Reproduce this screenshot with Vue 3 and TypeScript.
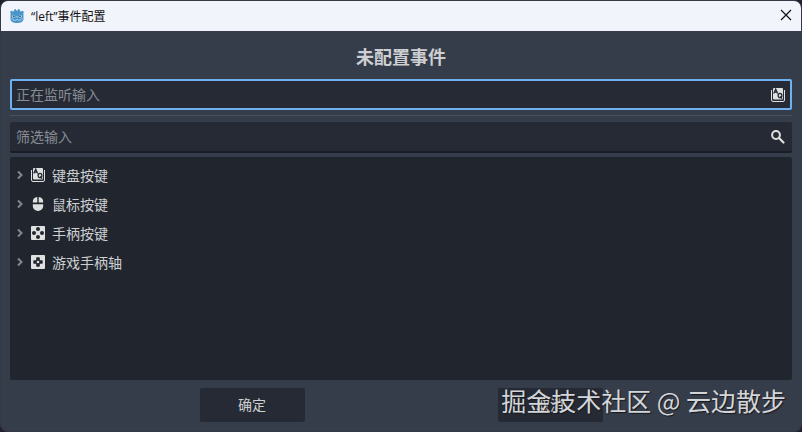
<script setup lang="ts">
import { ref } from 'vue'

type IconName = 'keyboard' | 'mouse' | 'joyButton' | 'joyAxis'

interface InputGroup {
  icon: IconName
  label: string
}

const groups: InputGroup[] = [
  { icon: 'keyboard', label: '键盘按键' },
  { icon: 'mouse', label: '鼠标按键' },
  { icon: 'joyButton', label: '手柄按键' },
  { icon: 'joyAxis', label: '游戏手柄轴' },
]

const listened = ref('')
const filter = ref('')
</script>

<template>
  <div class="window">
    <header class="titlebar">
      <svg class="logo" viewBox="0 0 16 16" aria-hidden="true">
        <path fill="#4a96cb" d="M5.200 1.600 6.800 1l.5 1.500h1.400L9.200 1l1.600.6.2 1.400 1 .6 1.500-.9L15 4l-.8 1.600.3.900V11c0 2.800-3 4-6.500 4s-6.500-1.200-6.500-4V6.500l.3-.9L1 4l1.500-1.300 1.500.9 1-.6z" />
        <path fill="none" stroke="#a9d0ec" stroke-width=".7" d="M1.700 11h2.500l.4 1.400h2.200l.2-.9h2l.2.9h2.200l.4-1.400h2.500" />
        <circle cx="4.700" cy="8.300" r="1.500" fill="#c4e0f4" />
        <circle cx="11.300" cy="8.300" r="1.500" fill="#c4e0f4" />
        <circle cx="4.900" cy="8.300" r="1" fill="#35617f" />
        <circle cx="11.100" cy="8.300" r="1" fill="#35617f" />
        <path stroke="#c4e0f4" stroke-width=".9" d="M8 8v1.600" />
      </svg>
      <span class="caption">“left”事件配置</span>
      <button class="close" type="button" aria-label="关闭">
        <svg viewBox="0 0 12 12" aria-hidden="true"><path d="m1 1 10 10M11 1 1 11" /></svg>
      </button>
    </header>

    <main class="content">
      <h1 class="heading">未配置事件</h1>

      <div class="field listening">
        <input v-model="listened" type="text" aria-label="正在监听输入" placeholder="正在监听输入">
        <svg class="icon" viewBox="0 0 16 16" aria-hidden="true">
          <path fill="currentColor" d="M4 1h8q1 0 1 1v9.500q0 1-1 1H4q-1 0-1-1V2q0-1 1-1z" />
          <path fill="none" stroke="currentColor" d="M1.500 3v10q0 1.500 1.500 1.500h10q1.500 0 1.500-1.500V3" />
          <path class="glyph" d="m3.800 6.500 1.900-4.300 1.900 4.300M4.600 5.200h2.200" />
          <ellipse class="glyph" cx="10" cy="8.500" rx="1.900" ry="2.200" />
          <path class="glyph" d="m10.200 9.500 1.800 2.200" />
        </svg>
      </div>

      <hr class="separator">

      <div class="field filter">
        <input v-model="filter" type="text" aria-label="筛选输入" placeholder="筛选输入">
        <svg class="icon" viewBox="0 0 16 16" aria-hidden="true">
          <circle cx="6" cy="6" r="3.900" fill="none" stroke="currentColor" stroke-width="2" />
          <path d="m9 9 4.500 4.500" stroke="currentColor" stroke-width="2.200" stroke-linecap="round" />
        </svg>
      </div>

      <ul class="tree">
        <li v-for="group in groups" :key="group.icon">
          <button class="row" type="button" aria-expanded="false">
            <svg class="arrow" viewBox="0 0 12 12" aria-hidden="true"><path d="M4 2.500 7.500 6 4 9.500" /></svg>
            <svg class="icon" viewBox="0 0 16 16" aria-hidden="true">
              <template v-if="group.icon === 'keyboard'">
                <path fill="currentColor" d="M4 1h8q1 0 1 1v9.500q0 1-1 1H4q-1 0-1-1V2q0-1 1-1z" />
                <path fill="none" stroke="currentColor" d="M1.500 3v10q0 1.500 1.500 1.500h10q1.500 0 1.500-1.500V3" />
                <path class="glyph" d="m3.800 6.500 1.900-4.300 1.900 4.300M4.600 5.200h2.200" />
                <ellipse class="glyph" cx="10" cy="8.500" rx="1.900" ry="2.200" />
                <path class="glyph" d="m10.200 9.500 1.800 2.200" />
              </template>
              <path
                v-else-if="group.icon === 'mouse'"
                fill="currentColor"
                d="M7.300 1v5.600H2.800V6A5 5 0 0 1 7.300 1zm1.400 0v5.600h4.500V6A5 5 0 0 0 8.700 1zM2.800 8.300h10.400V10a5.200 5 0 0 1-10.400 0z"
              />
              <template v-else-if="group.icon === 'joyButton'">
                <rect x="1" y="1" width="14" height="14" rx="1" fill="currentColor" />
                <g class="hole">
                  <circle cx="8" cy="4" r="2" />
                  <circle cx="4" cy="8" r="2" />
                  <circle cx="12" cy="8" r="2" />
                  <circle cx="8" cy="12" r="2" />
                </g>
              </template>
              <template v-else>
                <rect x="1" y="1" width="14" height="14" rx="1" fill="currentColor" />
                <path class="hole" d="M7 3.300h2q.8 0 .8.8v2.100h2.100q.8 0 .8.8v2q0 .8-.8.8H9.800v2.100q0 .8-.8.8H7q-.8 0-.8-.8V9.800H4.100q-.8 0-.8-.8V7q0-.8.8-.8h2.100V4.100q0-.8.8-.8z" />
                <circle cx="8" cy="8" r="1.300" fill="currentColor" />
              </template>
            </svg>
            <span>{{ group.label }}</span>
          </button>
        </li>
      </ul>

      <footer class="actions">
        <button class="action" type="button">确定</button>
        <button class="action" type="button">取消</button>
      </footer>
    </main>

    <div class="watermark">掘金技术社区 @ 云边散步</div>
  </div>
</template>

<style>
body {
  background: #20212c;
}
</style>

<style scoped>
.window {
  position: relative;
  display: flex;
  flex-direction: column;
  box-sizing: border-box;
  min-height: 100vh;
  border: 1px solid #343946;
  border-radius: 8px;
  overflow: hidden;
  background: #363d4a;
  color: #cdcfd2;
  font-family: "Noto Sans CJK SC", sans-serif;
  font-size: 14px;
}

button,
input {
  font: inherit;
  color: inherit;
}

.titlebar {
  display: flex;
  align-items: center;
  height: 30px;
  padding: 0 8px;
  background: #f1f4fb;
  color: #111;
  font-size: 12px;
}

.logo {
  width: 16px;
  height: 16px;
}

.caption {
  flex: 1;
  margin-left: 6px;
  padding-bottom: 1px;
  font-family: "Open Sans", "Noto Sans CJK SC", sans-serif;
}

.close {
  display: flex;
  padding: 0 1px 2px;
  border: 0;
  background: none;
}

.close svg {
  width: 12px;
  height: 12px;
  fill: none;
  stroke: #111;
  stroke-width: 1.2;
}

.content {
  flex: 1;
  display: flex;
  flex-direction: column;
  padding: 12px 9px 9px;
}

.heading {
  margin: 0 0 10px;
  font-size: 18px;
  line-height: 26px;
  font-weight: 700;
  text-align: center;
}

.field {
  display: flex;
  align-items: center;
  box-sizing: border-box;
  height: 31px;
  padding: 0 6px;
  background: #252a34;
  border-radius: 2px;
}

.listening {
  padding: 0 4px;
  border: 2px solid #6fb0f0;
}

.filter {
  border-bottom: 2px solid #191d25;
}

.field input {
  flex: 1;
  min-width: 0;
  height: 22px;
  padding: 0 0 1px;
  border: 0;
  outline: 0;
  background: none;
}

.field input::placeholder {
  color: #888c94;
  opacity: 1;
}

.icon {
  flex: none;
  width: 16px;
  height: 16px;
  color: #e0e0e0;
}

.glyph {
  fill: none;
  stroke: #252a34;
  stroke-width: 1.3;
}

.hole {
  fill: #21262e;
}

.separator {
  width: 100%;
  height: 1px;
  margin: 5px 0 6px;
  border: 0;
  background: #4a515d;
}

.tree {
  flex: 1;
  margin: 4px 0 8px;
  padding: 4px 0;
  list-style: none;
  background: #21262e;
  border-radius: 2px;
}

.row {
  display: flex;
  align-items: center;
  width: 100%;
  height: 29px;
  padding: 0 4px 2px;
  border: 0;
  background: none;
  text-align: left;
}

.arrow {
  width: 12px;
  height: 12px;
  margin: 0 4px 0 0;
  fill: none;
  stroke: #83878d;
  stroke-width: 2;
}

.row span {
  margin-left: 6px;
}

.actions {
  display: flex;
  justify-content: center;
  gap: 193px;
}

.action {
  width: 105px;
  height: 34px;
  padding: 0 0 2px;
  border: 0;
  border-radius: 2px;
  background: #252a34;
}

.watermark {
  position: absolute;
  right: 15px;
  bottom: 13px;
  font-size: 25px;
  line-height: 36px;
  color: #d4d5d8;
  text-shadow: 1px 1px 1px #16191f;
  pointer-events: none;
}
</style>
